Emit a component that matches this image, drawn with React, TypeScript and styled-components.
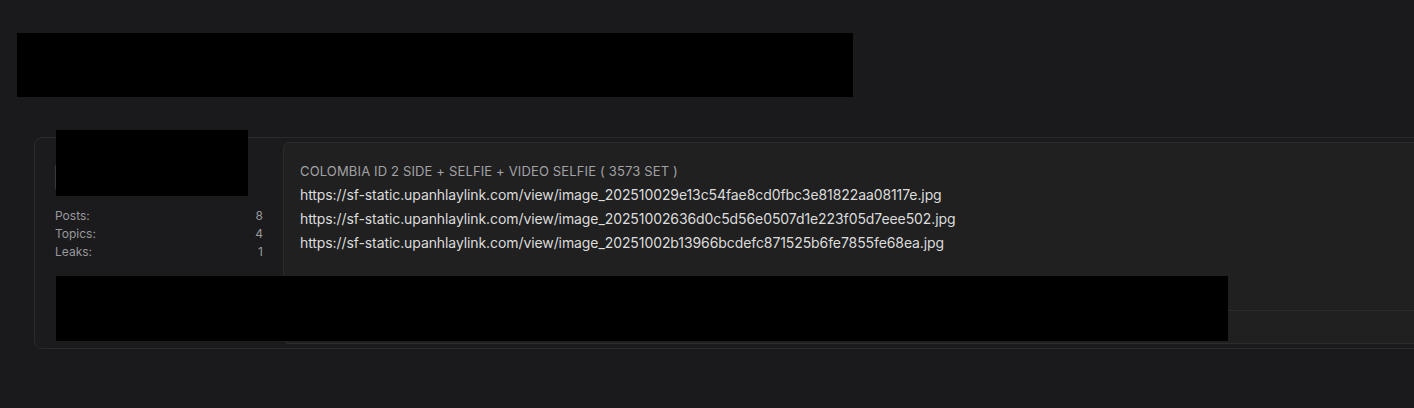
import React from "react";
import styled, { createGlobalStyle } from "styled-components";

const Global = createGlobalStyle`
  html, body { margin: 0; padding: 0; background: #1a1a1c; overflow: hidden; }
  body { font-family: Inter, "Noto Sans", sans-serif; }
`;

const Page = styled.div`
  padding: 33px 0 0 17px;
  width: 1430px;
  height: 408px;
  box-sizing: border-box;
`;

const Redacted = styled.div<{ $w: number; $h: number }>`
  background: #000;
  width: ${(p) => p.$w}px;
  height: ${(p) => p.$h}px;
`;

const Overlay = styled(Redacted)<{ $l: number; $t: number }>`
  position: absolute;
  left: ${(p) => p.$l}px;
  top: ${(p) => p.$t}px;
`;

const Card = styled.div`
  position: relative;
  margin: 40px 0 0 17px;
  width: 1420px;
  box-sizing: border-box;
  border: 1px solid #2a2a2c;
  border-radius: 8px;
  background: #1b1b1d;
  padding: 4px 0 4px 20px;
  display: flex;
  gap: 20px;
`;

const Side = styled.div`
  width: 208px;
  flex-shrink: 0;
  padding-top: 19px;
  display: flex;
  flex-direction: column;
`;

const NameBox = styled.div`
  width: 150px;
  height: 32px;
  box-sizing: border-box;
  border: 1px solid #38383a;
  border-radius: 6px;
  margin-bottom: 14px;
`;

const Stat = styled.div`
  display: flex;
  justify-content: space-between;
  font-size: 12px;
  line-height: 18px;
  color: #98989c;
`;

const Post = styled.div`
  flex: 1;
  background: #202020;
  border: 1px solid #2c2c2c;
  border-radius: 6px;
  display: flex;
  flex-direction: column;
  height: 202px;
  box-sizing: border-box;
`;

const Body = styled.div`
  flex: 1;
  padding: 16px 16px 0 16px;
`;

const Title = styled.div`
  font-size: 13px;
  line-height: 24px;
  color: #a2a2a6;
  white-space: nowrap;
  letter-spacing: 0.15px;
`;

const Link = styled.div`
  font-size: 14px;
  line-height: 24px;
  color: #dcdcdc;
  white-space: nowrap;
  letter-spacing: -0.09px;
`;

const Footer = styled.div`
  height: 32px;
  border-top: 1px solid #2c2c2c;
`;

const urls = [
  "https://sf-static.upanhlaylink.com/view/image_202510029e13c54fae8cd0fbc3e81822aa08117e.jpg",
  "https://sf-static.upanhlaylink.com/view/image_20251002636d0c5d56e0507d1e223f05d7eee502.jpg",
  "https://sf-static.upanhlaylink.com/view/image_20251002b13966bcdefc871525b6fe7855fe68ea.jpg",
];

export default function App() {
  return (
    <>
      <Global />
      <Page>
        <Redacted $w={836} $h={64} />
        <Card>
          <Side>
            <NameBox />
            <Stat><span>Posts:</span><span>8</span></Stat>
            <Stat><span>Topics:</span><span>4</span></Stat>
            <Stat><span>Leaks:</span><span>1</span></Stat>
          </Side>
          <Post>
            <Body>
              <Title>COLOMBIA ID 2 SIDE + SELFIE + VIDEO SELFIE ( 3573 SET )</Title>
              {urls.map((u) => (
                <Link key={u}>{u}</Link>
              ))}
            </Body>
            <Footer />
          </Post>
          <Overlay $l={21} $t={-8} $w={192} $h={66} />
          <Overlay $l={21} $t={138} $w={1172} $h={65} />
        </Card>
      </Page>
    </>
  );
}
